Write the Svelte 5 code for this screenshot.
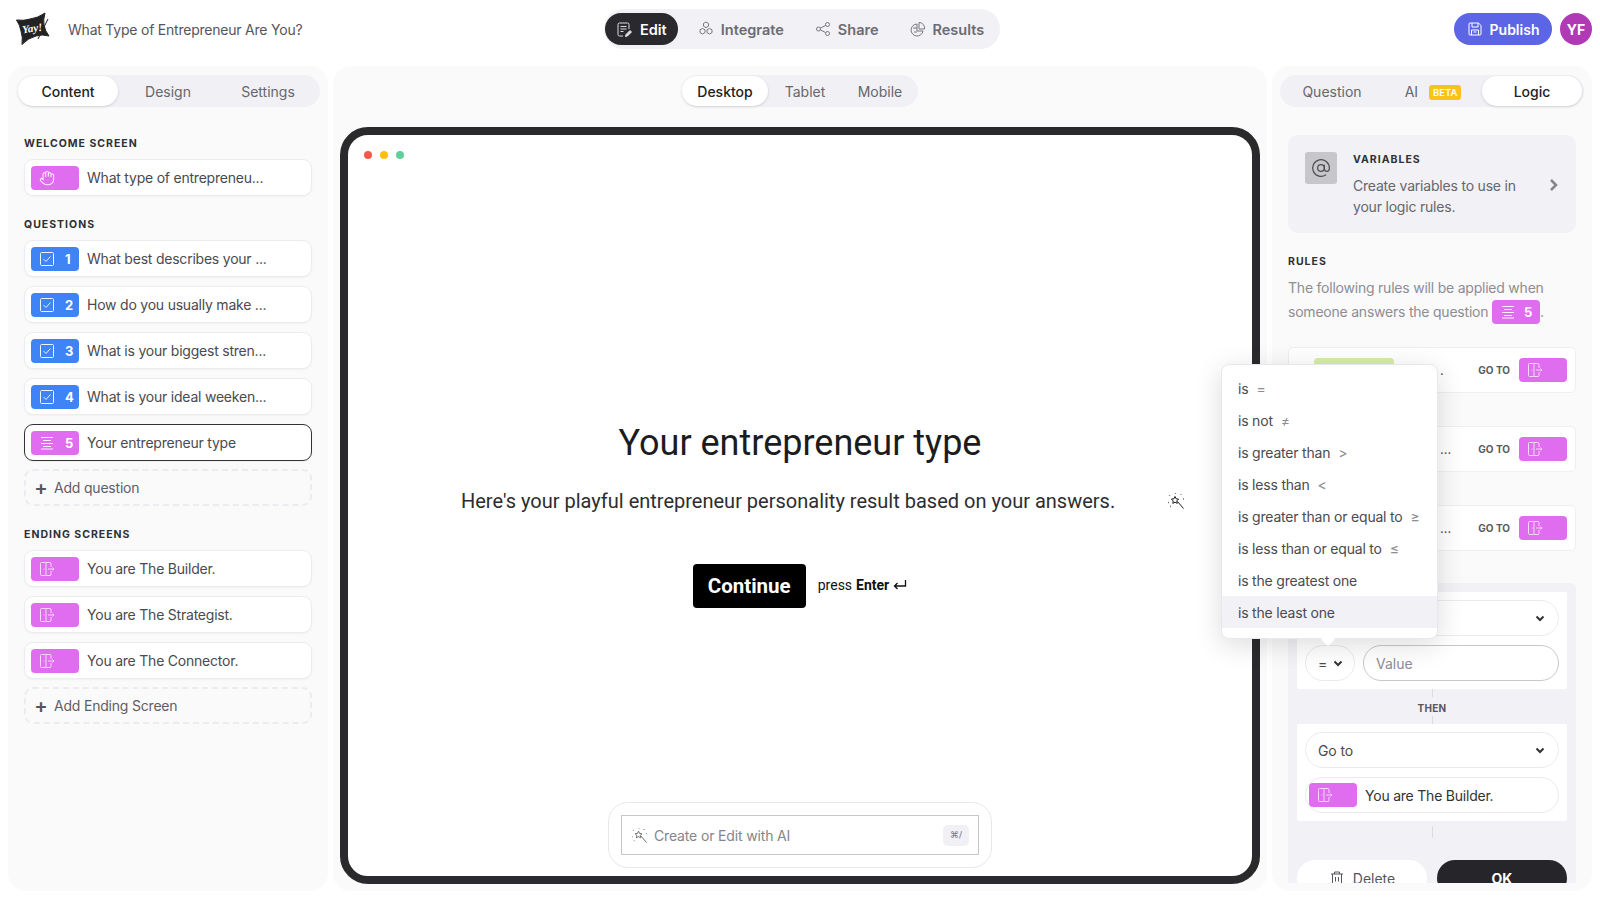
<script>
  const mainNav = [
    { label: 'Integrate', icon: 'hex' },
    { label: 'Share', icon: 'share' },
    { label: 'Results', icon: 'pie' }
  ];

  const questions = [
    { n: 1, text: 'What best describes your ...' },
    { n: 2, text: 'How do you usually make ...' },
    { n: 3, text: 'What is your biggest stren...' },
    { n: 4, text: 'What is your ideal weeken...' }
  ];

  const endings = ['You are The Builder.', 'You are The Strategist.', 'You are The Connector.'];

  const rules = [{ tail: '.' }, { tail: '...' }, { tail: '...' }];

  const operators = [
    { text: 'is', sign: '=' },
    { text: 'is not', sign: '≠' },
    { text: 'is greater than', sign: '>' },
    { text: 'is less than', sign: '<' },
    { text: 'is greater than or equal to', sign: '≥' },
    { text: 'is less than or equal to', sign: '≤' },
    { text: 'is the greatest one', sign: '' },
    { text: 'is the least one', sign: '', active: true }
  ];
</script>

{#snippet door()}
  <svg class="ico door" viewBox="0 0 16 16" fill="none" stroke="currentColor" stroke-width="1">
    <rect x="1.5" y="1.5" width="5.5" height="13" rx="1" />
    <path d="M7 1.5h4a1 1 0 0 1 1 1V6M12 10v3.5a1 1 0 0 1-1 1H7M9 8h6M13.5 6.500 15 8l-1.5 1.5" />
    <circle cx="5" cy="8" r=".6" fill="currentColor" stroke="none" />
  </svg>
{/snippet}

{#snippet lines()}
  <svg class="ico" viewBox="0 0 16 16" fill="none" stroke="currentColor" stroke-width="1">
    <path d="M2 2.5h12M4 5.5h8M2 8.5h12M4 11.5h8M2 14h12" />
  </svg>
{/snippet}

{#snippet check()}
  <svg class="ico" viewBox="0 0 16 16" fill="none" stroke="currentColor" stroke-width="1">
    <rect x="1.5" y="1.5" width="13" height="13" rx="1" />
    <path d="M4.5 8l2.500 2.500 4.500-5" />
  </svg>
{/snippet}

{#snippet wand(size)}
  <svg width={size} height={size} viewBox="0 0 18 18" fill="none" stroke="currentColor" stroke-width="1">
    <path d="M8 4.5l1.100 2.300 2.500.3-1.800 1.800.4 2.500L8 10.200l-2.200 1.200.4-2.500-1.800-1.800 2.500-.3zM10.500 9.500l6 7" />
    <path d="M14 2.5v.6M2.500 3.500v.6M1 10.500h.6M3 14.500h.6M8.500 1v.6M16 7h.6" stroke-width="1.300" />
  </svg>
{/snippet}

{#snippet chevron()}
  <svg class="chev" width="12" height="12" viewBox="0 0 12 12" fill="none" stroke="currentColor" stroke-width="2">
    <path d="M2.5 4.500 6 8l3.500-3.500" />
  </svg>
{/snippet}

<div class="page">
  <header class="topbar">
    <div class="brand">
      <div class="logo">
        <svg width="34" height="34" viewBox="0 0 34 34">
          <path d="M0.5 8 Q8 9 14 7 Q22 6 29 1 Q27 8 28 13 Q29 19 33 24 Q26 22 20 24 Q12 26 6 32.5 Q7 25 5 19 Q4 13 0.5 8z" fill="#222" stroke="#222" stroke-linejoin="round" />
          <path d="M32 7 22 27" stroke="#222" stroke-width="1" />
        </svg>
        <span class="logo-word">Yay!</span>
      </div>
      <span class="form-title">What Type of Entrepreneur Are You?</span>
    </div>

    <nav class="main-nav">
      <button class="nav-item active">
        <svg width="17" height="17" viewBox="0 0 17 17" fill="none" stroke="currentColor" stroke-width="1">
          <path d="M7 15H3.5A1.5 1.5 0 0 1 2 13.5v-10A1.5 1.5 0 0 1 3.5 2h8A1.5 1.5 0 0 1 13 3.5V8M4.5 5.5h6M4.5 8h6M4.5 10.5h3" />
          <path d="M9.5 15.5l.5-2 4-4 1.5 1.5-4 4z" fill="currentColor" />
        </svg>
        Edit
      </button>
      {#each mainNav as item}
        <button class="nav-item">
          {#if item.icon === 'hex'}
            <svg width="16" height="16" viewBox="0 0 16 16" fill="none" stroke="currentColor" stroke-width="1">
              <path d="M8 1l2.5 1.400v2.800L8 6.600 5.500 5.200V2.400zM4.500 7.400 7 8.800v2.800L4.500 13 2 11.600V8.800zM11.500 7.400 14 8.800v2.800L11.500 13 9 11.600V8.800z" />
            </svg>
          {:else if item.icon === 'share'}
            <svg width="16" height="16" viewBox="0 0 16 16" fill="none" stroke="currentColor" stroke-width="1">
              <circle cx="3.5" cy="8" r="2" /><circle cx="12.5" cy="3.5" r="2" /><circle cx="12.5" cy="12.5" r="2" />
              <path d="M5.300 7.100l5.400-2.700M5.300 8.900l5.400 2.700" />
            </svg>
          {:else}
            <svg width="16" height="16" viewBox="0 0 16 16" fill="none" stroke="currentColor" stroke-width="1">
              <path d="M7 3a6 6 0 1 0 6 7H7z" /><path d="M9 1.5a5.500 5.500 0 0 1 5.500 6.500H9z" /><path d="M3 7h4M4 11h3" />
            </svg>
          {/if}
          {item.label}
        </button>
      {/each}
    </nav>

    <div class="top-actions">
      <button class="publish">
        <svg width="16" height="16" viewBox="0 0 16 16" fill="none" stroke="currentColor" stroke-width="1">
          <path d="M2 3a1 1 0 0 1 1-1h8.500L14 4.500V13a1 1 0 0 1-1 1H3a1 1 0 0 1-1-1z" />
          <path d="M5 2v4h6V2M4.500 14V9h7v5M6.500 11h3" />
        </svg>
        Publish
      </button>
      <div class="avatar">YF</div>
    </div>
  </header>

  <main class="workspace">
    <aside class="panel left">
      <div class="tabs side-tabs">
        <button class="tab on">Content</button>
        <button class="tab">Design</button>
        <button class="tab">Settings</button>
      </div>

      <h4 class="label first">Welcome screen</h4>
      <div class="item">
        <span class="badge pink">
          <svg class="ico" viewBox="0 0 24 24" fill="none" stroke="currentColor" stroke-width="1.6">
            <path d="M18 11V6a2 2 0 0 0-4 0M14 10V4a2 2 0 0 0-4 0v2M10 10.500V6a2 2 0 0 0-4 0v8M18 8a2 2 0 1 1 4 0v6a8 8 0 0 1-8 8h-2c-2.800 0-4.500-.860-5.990-2.340l-3.600-3.600a2 2 0 0 1 2.830-2.820L7 15" />
          </svg>
        </span>
        <span>What type of entrepreneu...</span>
      </div>

      <h4 class="label">Questions</h4>
      <div class="stack">
        {#each questions as q}
          <div class="item">
            <span class="badge blue">{@render check()}<b>{q.n}</b></span>
            <span>{q.text}</span>
          </div>
        {/each}
        <div class="item selected">
          <span class="badge pink">{@render lines()}<b>5</b></span>
          <span>Your entrepreneur type</span>
        </div>
        <button class="add"><span class="plus">+</span>Add question</button>
      </div>

      <h4 class="label">Ending screens</h4>
      <div class="stack">
        {#each endings as text}
          <div class="item">
            <span class="badge pink">{@render door()}</span>
            <span>{text}</span>
          </div>
        {/each}
        <button class="add"><span class="plus">+</span>Add Ending Screen</button>
      </div>
    </aside>

    <section class="panel center">
      <div class="tabs device">
        <button class="tab on">Desktop</button>
        <button class="tab">Tablet</button>
        <button class="tab">Mobile</button>
      </div>

      <div class="frame">
        <div class="dots"><i class="red"></i><i class="yellow"></i><i class="green"></i></div>

        <div class="screen">
          <h1>Your entrepreneur type</h1>
          <div class="subtitle">
            <p>Here's your playful entrepreneur personality result based on your answers.</p>
            <span class="sub-wand">{@render wand(18)}</span>
          </div>
          <div class="cta">
            <button class="continue">Continue</button>
            <span class="hint">press <b>Enter</b>
              <svg width="14" height="12" viewBox="0 0 14 12" fill="none" stroke="currentColor" stroke-width="1.3">
                <path d="M12.5 1v6H1.5M4.5 4l-3 3 3 3" />
              </svg>
            </span>
          </div>
        </div>

        <div class="ai-box">
          <div class="ai-input">
            <span class="ai-wand">{@render wand(17)}</span>
            <span class="ai-text">Create or Edit with AI</span>
            <kbd>⌘/</kbd>
          </div>
        </div>
      </div>
    </section>

    <aside class="panel right">
      <div class="right-scroll">
        <div class="tabs logic-tabs">
          <button class="tab">Question</button>
          <button class="tab">AI <em>BETA</em></button>
          <button class="tab on">Logic</button>
        </div>

        <div class="variables">
          <span class="at">
            <svg width="20" height="20" viewBox="0 0 24 24" fill="none" stroke="currentColor" stroke-width="1.5">
              <circle cx="12" cy="12" r="4" />
              <path d="M16 8v5a3 3 0 0 0 6 0v-1a10 10 0 1 0-4 8" />
            </svg>
          </span>
          <div class="var-copy">
            <h4 class="label flat">Variables</h4>
            <p>Create variables to use in your logic rules.</p>
          </div>
          <svg class="var-arrow" width="12" height="14" viewBox="0 0 12 14" fill="none" stroke="currentColor" stroke-width="2.5">
            <path d="M3 2l5 5-5 5" />
          </svg>
        </div>

        <h4 class="label rules-label">Rules</h4>
        <p class="rules-copy">
          The following rules will be applied when someone answers the question
          <span class="badge pink inline">{@render lines()}<b>5</b></span>.
        </p>

        <div class="rule-list">
          {#each rules as rule}
            <div class="rule">
              <span class="rule-tag"></span>
              <span class="rule-tail">{rule.tail}</span>
              <span class="goto">GO TO</span>
              <span class="badge pink">{@render door()}</span>
            </div>
          {/each}
        </div>

        <div class="editor">
          <div class="editor-card">
            <div class="select">{@render chevron()}</div>
            <div class="cond-row">
              <div class="select op">={@render chevron()}</div>
              <div class="value">Value</div>
            </div>
          </div>

          <div class="then">
            <i class="wire"></i>
            <span>THEN</span>
            <i class="wire"></i>
          </div>

          <div class="editor-card">
            <div class="select">Go to{@render chevron()}</div>
            <div class="select target">
              <span class="badge pink">{@render door()}</span>
              You are The Builder.
            </div>
          </div>

          <i class="wire tail-wire"></i>

          <div class="editor-actions">
            <button class="delete">
              <svg width="16" height="16" viewBox="0 0 16 16" fill="none" stroke="currentColor" stroke-width="1">
                <path d="M2 4h12M5.500 4V2h5v2M3.500 4v10h9V4M6.500 7v4.500M9.500 7v4.500" />
              </svg>
              Delete
            </button>
            <button class="ok">OK</button>
          </div>
        </div>
      </div>

      <div class="op-menu">
        {#each operators as op}
          <div class="op-item" class:hover={op.active}>
            {op.text}{#if op.sign}<span class="sign">{op.sign}</span>{/if}
          </div>
        {/each}
        <i class="op-arrow"></i>
      </div>
    </aside>
  </main>
</div>

<style>
  :global(body) {
    margin: 0;
    background: #fff;
    font-family: Inter, "Liberation Sans", sans-serif;
    color: #2b2b30;
  }

  button {
    font: inherit;
    border: 0;
    background: none;
    cursor: pointer;
    padding: 0;
  }

  h1, h4, p {
    margin: 0;
  }

  .page {
    width: 1600px;
    height: 900px;
    overflow: hidden;
  }

  .topbar {
    height: 66px;
    padding: 0 8px 8px 16px;
    box-sizing: border-box;
    display: grid;
    grid-template-columns: 1fr auto 1fr;
    align-items: center;
  }

  .brand {
    display: flex;
    align-items: center;
    gap: 18px;
  }

  .logo {
    position: relative;
    width: 34px;
    height: 34px;
  }

  .logo-word {
    position: absolute;
    left: 6px;
    top: 10px;
    font-family: "Liberation Serif", serif;
    font-style: italic;
    font-weight: 700;
    font-size: 11px;
    color: #fff;
    transform: rotate(-8deg);
  }

  .form-title {
    font-size: 14px;
    letter-spacing: -0.22px;
    color: #55555c;
  }

  .main-nav {
    display: flex;
    align-items: center;
    height: 40px;
    padding: 0 16px 0 1px;
    background: #f1f1f6;
    border-radius: 20px;
    margin-right: 4px;
  }

  .nav-item {
    display: flex;
    align-items: center;
    gap: 7px;
    height: 32px;
    font-size: 14.5px;
    font-weight: 600;
    color: #6b6b72;
    margin-left: 31px;
  }

  .nav-item svg {
    color: #77777e;
  }

  .nav-item.active {
    margin-left: 0;
    width: 73px;
    justify-content: center;
    background: #2a2a2e;
    color: #fff;
    border-radius: 16px;
    margin-right: -11px;
  }

  .nav-item.active svg {
    color: #ddd;
  }

  .top-actions {
    display: flex;
    justify-content: flex-end;
    align-items: center;
    gap: 8px;
  }

  .publish {
    display: flex;
    align-items: center;
    justify-content: center;
    gap: 7px;
    width: 98px;
    height: 32px;
    background: #5b65e6;
    color: #fff;
    font-size: 14px;
    font-weight: 600;
    border-radius: 16px;
  }

  .avatar {
    width: 32px;
    height: 32px;
    border-radius: 50%;
    background: #b03ab5;
    color: #fff;
    font-size: 14px;
    font-weight: 700;
    display: flex;
    align-items: center;
    justify-content: center;
  }

  .workspace {
    display: grid;
    grid-template-columns: 320px 934px 320px;
    gap: 5px;
    padding: 0 8px;
    height: 825px;
  }

  .panel {
    background: #fafafb;
    border-radius: 18px;
    box-sizing: border-box;
  }

  .left {
    padding: 9px 8px 0 10px;
  }

  .tabs {
    display: grid;
    height: 32px;
    background: #f1f1f5;
    border-radius: 16px;
    align-items: center;
  }

  .side-tabs {
    grid-template-columns: repeat(3, 100px);
  }

  .tab {
    height: 30px;
    font-size: 14px;
    color: #66666d;
    border-radius: 15px;
  }

  .tab.on {
    background: #fff;
    color: #222;
    font-weight: 500;
    box-shadow: 0 1px 3px rgba(0, 0, 0, 0.14);
  }

  .label {
    font-size: 10.5px;
    font-weight: 700;
    letter-spacing: 1px;
    text-transform: uppercase;
    color: #2f2f35;
    line-height: 13px;
    margin: 22px 0 9px 6px;
  }

  .label.first {
    margin-top: 30px;
  }

  .item {
    display: flex;
    align-items: center;
    gap: 8px;
    width: 288px;
    height: 37px;
    margin-left: 6px;
    padding-left: 6px;
    box-sizing: border-box;
    background: #fff;
    border: 1px solid #ececf0;
    border-radius: 9px;
    box-shadow: 0 1px 2px rgba(0, 0, 0, 0.04);
    font-size: 14px;
    letter-spacing: -0.22px;
    color: #4a4a50;
  }

  .item.selected {
    border-color: #333;
  }

  .stack {
    display: flex;
    flex-direction: column;
    gap: 9px;
  }

  .badge {
    display: inline-flex;
    align-items: center;
    gap: 10px;
    flex: none;
    box-sizing: border-box;
    width: 48px;
    height: 24px;
    padding-left: 8px;
    border-radius: 4px;
    color: #fff;
    font-size: 13px;
    letter-spacing: 0;
  }

  .badge b {
    font-weight: 700;
  }

  .pink {
    background: #e06cf0;
  }

  .blue {
    background: #3f84f7;
  }

  .ico {
    width: 16px;
    height: 16px;
    flex: none;
    opacity: 0.9;
  }

  .door {
    opacity: 0.75;
  }

  .add {
    display: flex;
    align-items: center;
    gap: 6px;
    width: 288px;
    height: 37px;
    margin: -1px 0 0 6px;
    padding-left: 8px;
    box-sizing: border-box;
    border: 2px dashed #ececf0;
    border-radius: 9px;
    font-size: 14px;
    letter-spacing: -0.2px;
    color: #5e5e65;
    text-align: left;
  }

  .plus {
    font-size: 20px;
    line-height: 1;
    font-weight: 600;
    color: #55555c;
    width: 14px;
    text-align: center;
  }

  .center {
    padding: 9px 7px 0;
    display: flex;
    flex-direction: column;
    align-items: center;
  }

  .device {
    grid-template-columns: 86px 74px 76px;
    width: 236px;
  }

  .frame {
    width: 920px;
    height: 757px;
    flex: none;
    margin-top: 20px;
    box-sizing: border-box;
    border: 8px solid #2a2a2c;
    border-radius: 28px;
    background: #fff;
    display: flex;
    flex-direction: column;
    align-items: center;
  }

  .dots {
    align-self: flex-start;
    display: flex;
    gap: 8px;
    padding: 16px 0 0 16px;
  }

  .dots i {
    width: 8px;
    height: 8px;
    border-radius: 50%;
  }

  .red { background: #f2594b; }
  .yellow { background: #fbbf0e; }
  .green { background: #62cf9b; }

  .screen {
    flex: 1;
    font-family: Roboto, Arial, sans-serif;
    display: flex;
    flex-direction: column;
    align-items: center;
    padding-top: 262px;
  }

  h1 {
    font-size: 36px;
    font-weight: 400;
    line-height: 44px;
    color: #1c1c1e;
  }

  .subtitle {
    position: relative;
    width: 678px;
    margin-top: 21px;
  }

  .subtitle p {
    font-size: 20px;
    line-height: 30px;
    color: #2d2d2f;
  }

  .sub-wand {
    position: absolute;
    left: 706px;
    top: 6px;
    color: #1c1c1e;
  }

  .cta {
    display: flex;
    align-items: center;
    gap: 12px;
    margin-top: 48px;
  }

  .continue {
    width: 113px;
    height: 44px;
    background: #000;
    color: #fff;
    border-radius: 4px;
    font-family: inherit;
    font-size: 20.5px;
    font-weight: 700;
  }

  .hint {
    display: inline-flex;
    align-items: center;
    gap: 4px;
    padding-bottom: 2px;
    font-size: 14px;
    color: #111;
  }

  .ai-box {
    width: 384px;
    height: 66px;
    margin-bottom: 8px;
    box-sizing: border-box;
    padding: 12px;
    background: #fff;
    border: 1px solid #e8e8ea;
    border-radius: 20px;
  }

  .ai-input {
    display: flex;
    align-items: center;
    height: 40px;
    padding: 0 9px;
    box-sizing: border-box;
    border: 1px solid #c8c8cc;
    font-size: 14px;
    color: #85858b;
  }

  .ai-wand {
    display: flex;
    margin-right: 6px;
    color: #66666c;
  }

  .ai-text {
    flex: 1;
    letter-spacing: -0.15px;
  }

  kbd {
    width: 26px;
    height: 21px;
    display: flex;
    align-items: center;
    justify-content: center;
    border-radius: 5px;
    background: #f0f0f5;
    font-family: "DejaVu Sans", sans-serif;
    font-size: 9px;
    color: #77777c;
  }

  .right {
    position: relative;
  }

  .right-scroll {
    height: 817px;
    overflow: hidden;
    padding: 9px 16px 0;
    box-sizing: border-box;
  }

  .logic-tabs {
    grid-template-columns: 104px 98px 100px;
    margin: 0 -8px;
  }

  .logic-tabs em {
    display: inline-block;
    margin-left: 7px;
    padding: 0 4px;
    font-size: 9.5px;
    line-height: 15px;
    font-style: normal;
    font-weight: 600;
    color: #fff;
    background: #fbc31a;
    border-radius: 3px;
    vertical-align: 1px;
  }

  .variables {
    display: flex;
    align-items: flex-start;
    height: 98px;
    margin-top: 28px;
    padding: 17px 0 0 17px;
    box-sizing: border-box;
    background: #f1f1f6;
    border-radius: 10px;
  }

  .at {
    flex: none;
    width: 32px;
    height: 32px;
    display: flex;
    align-items: center;
    justify-content: center;
    background: #c6c6cb;
    border-radius: 3px;
    color: #4d4d52;
  }

  .var-copy {
    width: 176px;
    margin-left: 16px;
  }

  .label.flat {
    margin: 1px 0 0;
  }

  .var-copy p {
    margin-top: 9px;
    font-size: 14px;
    line-height: 21px;
    letter-spacing: -0.2px;
    color: #66666c;
  }

  .var-arrow {
    margin: 26px 0 0 19px;
    color: #85858b;
  }

  .rules-label {
    margin: 22px 0 0;
  }

  .rules-copy {
    margin-top: 8px;
    font-size: 14px;
    line-height: 24px;
    letter-spacing: -0.22px;
    color: #8d8d93;
  }

  .badge.inline {
    vertical-align: middle;
    gap: 8px;
    margin-top: -2px;
  }

  .rule-list {
    display: flex;
    flex-direction: column;
    gap: 33px;
    margin-top: 23px;
  }

  .rule {
    display: flex;
    align-items: center;
    height: 46px;
    box-sizing: border-box;
    padding: 0 8px 0 25px;
    background: #fff;
    border: 1px solid #efeff2;
    border-radius: 5px;
    font-size: 13px;
    color: #555;
  }

  .rule-tag {
    width: 80px;
    height: 24px;
    background: #d5eea6;
    border-radius: 4px;
    flex: none;
  }

  .rule-tail {
    margin-left: 46px;
    flex: 1;
  }

  .goto {
    font-size: 10px;
    font-weight: 700;
    color: #5a5a60;
    margin-right: 9px;
  }

  .editor {
    margin-top: 32px;
    padding: 9px 9px 0;
    height: 340px;
    background: #f1f1f6;
    border-radius: 5px 5px 0 0;
    box-sizing: border-box;
  }

  .editor-card {
    display: flex;
    flex-direction: column;
    gap: 9px;
    padding: 8px;
    background: #fff;
    border-radius: 2px;
  }

  .select {
    display: flex;
    align-items: center;
    justify-content: space-between;
    height: 36px;
    box-sizing: border-box;
    padding: 0 12px;
    background: #fff;
    border: 1px solid #ebebee;
    border-radius: 18px;
    font-size: 14px;
    letter-spacing: -0.1px;
    color: #4a4a50;
  }

  .chev {
    margin-left: auto;
    color: #333;
  }

  .cond-row {
    display: flex;
    gap: 8px;
  }

  .op {
    width: 50px;
    flex: none;
    padding: 0 10px 0 12px;
    gap: 4px;
  }

  .value {
    flex: 1;
    height: 36px;
    display: flex;
    align-items: center;
    padding-left: 12px;
    box-sizing: border-box;
    border: 1px solid #c8c8cc;
    border-radius: 18px;
    font-size: 14px;
    color: #8d8d93;
  }

  .then {
    display: flex;
    flex-direction: column;
    align-items: center;
    height: 35px;
    font-size: 10px;
    font-weight: 700;
    letter-spacing: 0.3px;
    color: #56565c;
  }

  .then span {
    line-height: 15px;
    margin-top: 4px;
  }

  .wire {
    display: block;
    width: 1px;
    flex: 1;
    background: #dcdce0;
  }

  .target {
    justify-content: flex-start;
    gap: 8px;
    padding: 0 3px;
    letter-spacing: -0.22px;
    color: #333;
  }

  .tail-wire {
    height: 12px;
    margin: 5px auto 0;
  }

  .editor-actions {
    display: flex;
    gap: 10px;
    margin-top: 22px;
  }

  .delete {
    display: flex;
    align-items: center;
    justify-content: center;
    gap: 8px;
    width: 130px;
    height: 36px;
    flex: none;
    background: #fff;
    border-radius: 18px;
    font-size: 14px;
    color: #55555c;
  }

  .ok {
    flex: 1;
    height: 36px;
    background: #26262a;
    color: #fff;
    border-radius: 18px;
    font-size: 14px;
    font-weight: 700;
  }

  .op-menu {
    position: absolute;
    left: -51px;
    top: 298px;
    width: 217px;
    height: 275px;
    box-sizing: border-box;
    padding: 7px 0;
    background: #fff;
    border: 1px solid #e8e8ec;
    border-radius: 8px;
    box-shadow: 0 6px 28px rgba(0, 0, 0, 0.14);
  }

  .op-item {
    height: 32px;
    padding-left: 16px;
    display: flex;
    align-items: center;
    font-size: 14px;
    letter-spacing: -0.2px;
    color: #4a4a50;
  }

  .op-item.hover {
    background: #f2f2f6;
  }

  .sign {
    margin-left: 8px;
    color: #8d8d93;
  }

  .op-arrow {
    position: absolute;
    left: 101px;
    bottom: -6px;
    width: 10px;
    height: 10px;
    background: #fff;
    transform: rotate(45deg);
  }
</style>
